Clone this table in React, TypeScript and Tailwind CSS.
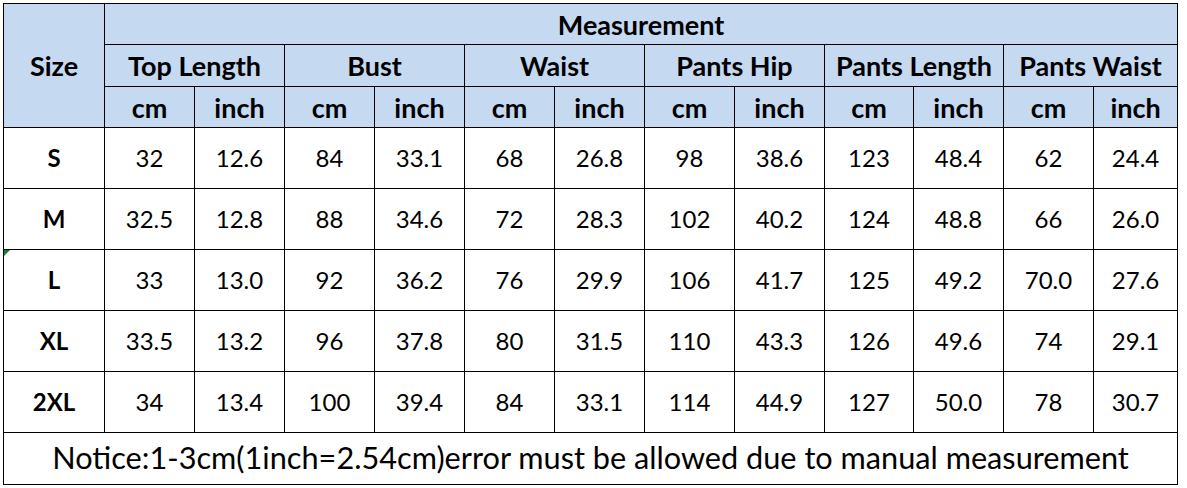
const GROUPS = ['Top Length', 'Bust', 'Waist', 'Pants Hip', 'Pants Length', 'Pants Waist']

const ROWS = [
  { size: 'S', values: ['32', '12.6', '84', '33.1', '68', '26.8', '98', '38.6', '123', '48.4', '62', '24.4'] },
  { size: 'M', values: ['32.5', '12.8', '88', '34.6', '72', '28.3', '102', '40.2', '124', '48.8', '66', '26.0'] },
  { size: 'L', values: ['33', '13.0', '92', '36.2', '76', '29.9', '106', '41.7', '125', '49.2', '70.0', '27.6'] },
  { size: 'XL', values: ['33.5', '13.2', '96', '37.8', '80', '31.5', '110', '43.3', '126', '49.6', '74', '29.1'] },
  { size: '2XL', values: ['34', '13.4', '100', '39.4', '84', '33.1', '114', '44.9', '127', '50.0', '78', '30.7'] },
]

const COL_WIDTHS = [101, 90, 90, 90, 90, 90, 90, 90, 90, 89, 90, 90, 84]

export default function App() {
  return (
    <div className="w-[1187px] h-[488px] bg-white pl-[3px] pt-[3px] font-['Lato',sans-serif] text-black">
      <table className="table-fixed border-collapse border border-black w-[1175px]">
        <colgroup>
          {COL_WIDTHS.map((w, i) => (
            <col key={i} style={{ width: w }} />
          ))}
        </colgroup>
        <thead className="bg-[#c5d9f1] font-bold text-[27px] leading-none">
          <tr className="h-[41px]">
            <th rowSpan={3} className="border border-black">Size</th>
            <th colSpan={12} className="border border-black">Measurement</th>
          </tr>
          <tr className="h-[42px]">
            {GROUPS.map((g) => (
              <th key={g} colSpan={2} className="border border-black whitespace-nowrap">
                {g}
              </th>
            ))}
          </tr>
          <tr className="h-[41px]">
            {GROUPS.map((g) => [
              <th key={g + 'cm'} className="border border-black">cm</th>,
              <th key={g + 'in'} className="border border-black">inch</th>,
            ])}
          </tr>
        </thead>
        <tbody className="text-[24px] leading-none">
          {ROWS.map((r) => (
            <tr key={r.size} className="h-[61px]">
              <td className="relative border border-black text-center font-bold">
                {r.size === 'L' && (
                  <svg className="absolute left-0 top-0" width="6" height="6" viewBox="0 0 6 6">
                    <polygon points="0,0 6,0 0,6" fill="#1e7b34" />
                  </svg>
                )}
                {r.size}
              </td>
              {r.values.map((v, i) => (
                <td key={i} className="border border-black text-center">
                  {v}
                </td>
              ))}
            </tr>
          ))}
          <tr className="h-[52px]">
            <td colSpan={13} className="border border-black text-center text-[30.7px] whitespace-nowrap">
              Notice:1-3cm(1inch=2.54cm)error must be allowed due to manual measurement
            </td>
          </tr>
        </tbody>
      </table>
    </div>
  )
}
